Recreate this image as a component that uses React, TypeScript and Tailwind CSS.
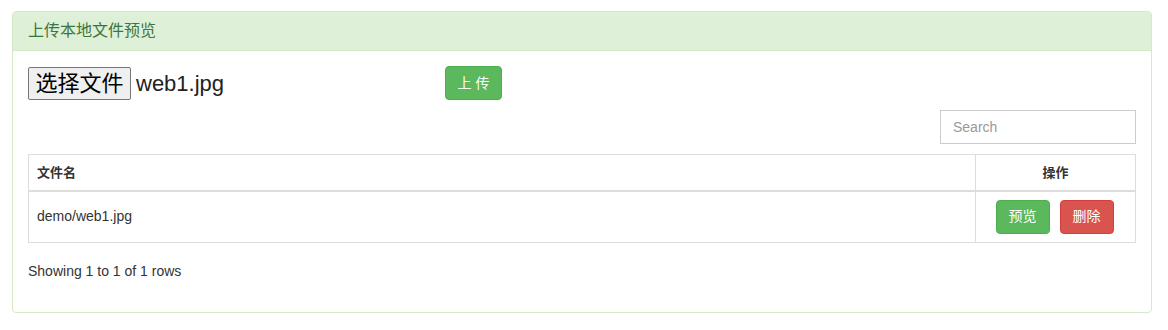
const font = { fontFamily: '"Liberation Sans", "Noto Sans CJK SC", Arial, sans-serif' };

export default function App() {
  return (
    <div className="min-h-screen bg-white pt-[11px] px-[12px] text-[#333]" style={font}>
      <div className="w-[1140px] border border-[#d6e9c6] rounded-[4px] bg-white">
        {/* Heading */}
        <div className="h-[39px] bg-[#dff0d8] border-b border-[#d6e9c6] rounded-t-[3px] px-[15px] flex items-center text-[16px] text-[#3c763d]">
          上传本地文件预览
        </div>

        {/* Body */}
        <div className="px-[15px] pt-[15px] pb-[15px]">
          <div className="flex items-center h-[34px]">
            <div className="w-[417px] flex items-center">
              <span className="h-[33px] w-[103px] flex items-center justify-center bg-[#efefef] border border-[#767676] rounded-[2px] text-[22px] text-black">
                选择文件
              </span>
              <span className="ml-[5px] text-[22px] text-[#222]">web1.jpg</span>
            </div>
            <button className="h-[34px] w-[57px] bg-[#5cb85c] border border-[#4cae4c] rounded-[4px] text-white text-[14px]">
              上 传
            </button>
          </div>

          <div className="flex justify-end mt-[10px]">
            <div className="w-[196px] h-[34px] border border-[#ccc] px-[12px] flex items-center text-[14px] text-[#999]">
              Search
            </div>
          </div>

          <table className="w-full mt-[10px] border border-[#ddd] border-collapse text-[14px]">
            <thead>
              <tr className="border-b-2 border-[#ddd]">
                <th className="h-[36px] px-[8px] text-left font-bold text-[13px]">文件名</th>
                <th className="w-[160px] px-[8px] text-center font-bold text-[13px] border-l border-[#ddd]">操作</th>
              </tr>
            </thead>
            <tbody>
              <tr>
                <td className="h-[52px] px-[8px]">demo/web1.jpg</td>
                <td className="pl-[6px] pr-[8px] border-l border-[#ddd]">
                  <div className="flex justify-center gap-[10px]">
                    <button className="h-[34px] w-[54px] bg-[#5cb85c] border border-[#4cae4c] rounded-[4px] text-white text-[14px]">
                      预览
                    </button>
                    <button className="h-[34px] w-[54px] bg-[#d9534f] border border-[#d43f3a] rounded-[4px] text-white text-[14px]">
                      删除
                    </button>
                  </div>
                </td>
              </tr>
            </tbody>
          </table>

          <div className="mt-[18px] mb-[16px] leading-[20px] text-[14px]">Showing 1 to 1 of 1 rows</div>
        </div>
      </div>
    </div>
  );
}
